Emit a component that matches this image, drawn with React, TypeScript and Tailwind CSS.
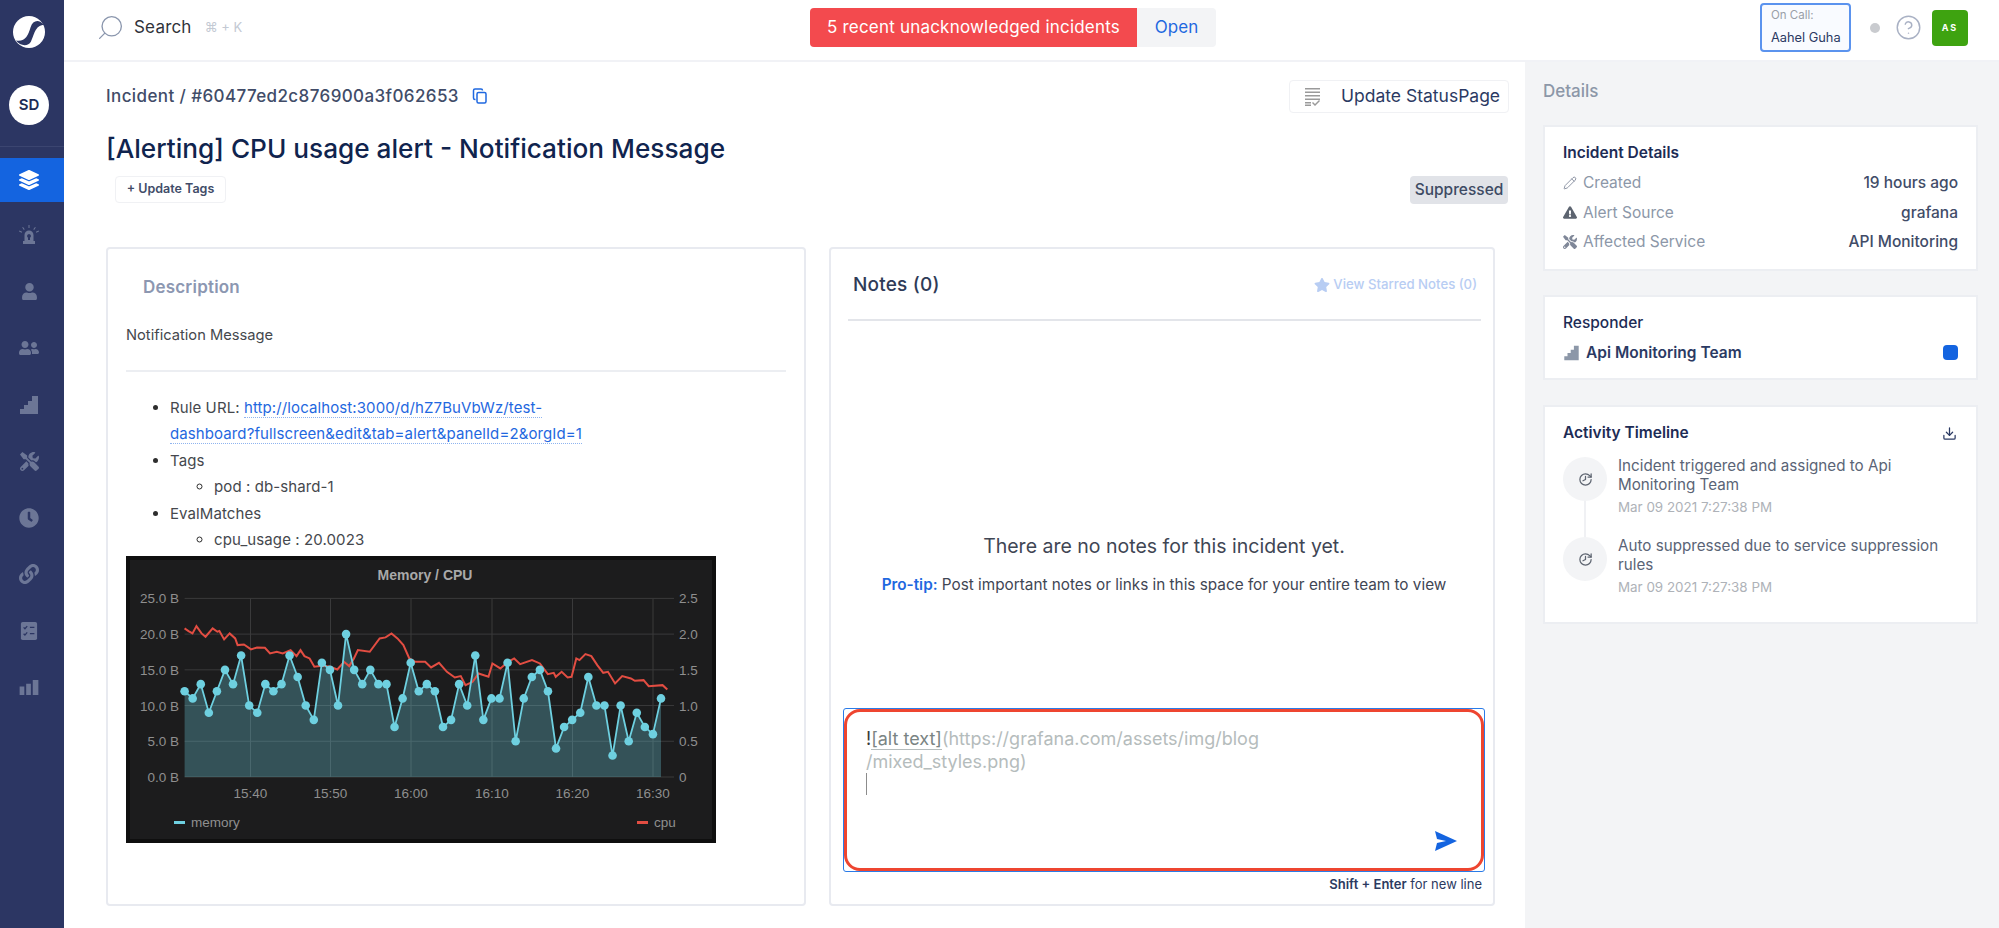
import React from "react"
import { CircleHelp, Download, History, Pencil, Search } from "lucide-react"
import { FaClock, FaExclamationTriangle, FaLayerGroup, FaLink, FaStar, FaTools, FaUser, FaUserFriends } from "react-icons/fa"

const Stairs = ({ className }: { className?: string }) => (
  <svg viewBox="0 0 20 20" className={className} fill="currentColor">
    <path d="M1 19v-5h4v-4h4V6h4V1h6v18z" />
  </svg>
)

const Siren = ({ className }: { className?: string }) => (
  <svg viewBox="0 0 20 20" className={className} fill="currentColor">
    <path d="M4 19v-3h1.500V10a4.500 4.500 0 0 1 9 0v6H16v3zM10 9a2 2 0 0 0-1 3.700V15h2v-2.300A2 2 0 0 0 10 9z" />
    <path d="M9.500 0h1v3h-1zM3.200 2.500l.8-.6 1.700 2.400-.8.600zM16.800 2.500l-.8-.6-1.700 2.400.8.600zM0 6.500l.4-.9 2.700 1.200-.4.900zM20 6.500l-.4-.9-2.700 1.200.4.900z" />
  </svg>
)

const Checklist = ({ className }: { className?: string }) => (
  <svg viewBox="0 0 20 20" className={className}>
    <rect x="1" y="0" width="18" height="20" rx="2" fill="currentColor" />
    <path d="M4 6l1.500 1.500L8 4.500M4 13l1.500 1.500L8 11.500M11 6h5M11 13h5" stroke="#2c3663" strokeWidth="1.400" fill="none" />
  </svg>
)

const Bars = ({ className }: { className?: string }) => (
  <svg viewBox="0 0 20 16" className={className} fill="currentColor">
    <path d="M0 7h5v9H0zM7 4h5v12H7zM14 0h6v16h-6z" />
  </svg>
)

const Logo = () => (
  <svg viewBox="0 0 32 32" className="h-8 w-8">
    <circle cx="16" cy="16" r="16" fill="#ffffff" />
    <path d="M31 9C26 3 20 4 17.500 11.500 15 20 12 26 3 24.500 7 30 15 31 18 25.500 21 19.500 22 9 31 9z" fill="#2c3663" />
  </svg>
)

const navIcons = [
  <Siren className="h-[20px] w-[20px]" />,
  <FaUser className="h-[17px] w-[17px]" />,
  <FaUserFriends className="h-[20px] w-[20px]" />,
  <Stairs className="h-[20px] w-[20px]" />,
  <FaTools className="h-[19px] w-[19px]" />,
  <FaClock className="h-[20px] w-[20px]" />,
  <FaLink className="h-[20px] w-[20px]" />,
  <Checklist className="h-[20px] w-[18px]" />,
  <Bars className="h-[15px] w-[20px]" />,
]

const Sidebar = () => (
  <div className="flex w-[64px] shrink-0 flex-col bg-[#2c3663]">
    <div className="flex h-[64px] items-center justify-center pr-[6px]">
      <Logo />
    </div>
    <div className="flex h-[83px] items-center justify-center border-b border-[#3b4570] pr-[6px]">
      <div className="flex h-10 w-10 items-center justify-center rounded-full bg-white text-[15px] font-semibold text-[#1d2c55]">SD</div>
    </div>
    <div className="mt-[11px] flex h-[44px] items-center justify-center bg-[#1464e0] pr-[6px] text-white">
      <FaLayerGroup className="h-[20px] w-[20px]" />
    </div>
    <div className="flex flex-col pt-[5px] text-[#6c7696]">
      {navIcons.map((icon, i) => (
        <div key={i} className="flex h-[56.500px] items-center justify-center pr-[6px]">
          {icon}
        </div>
      ))}
    </div>
  </div>
)

const Header = () => (
  <div className="flex h-[62px] shrink-0 items-start border-b-2 border-[#f1f2f6] bg-white">
    <div className="flex w-[746px] items-center pt-[13px] pl-[32px]">
      <Search className="h-[29px] w-[29px] -scale-x-100 text-[#8a96ad]" strokeWidth={1.100} />
      <span className="ml-[9px] text-[17px] tracking-[0.200px] text-[#30333a]">Search</span>
      <span className="ml-[13px] text-[13px] text-[#c3c9d3]">⌘ + K</span>
    </div>
    <div className="mt-[8px] flex h-[39px] w-[406px] text-[17px]">
      <div className="flex w-[327px] items-center justify-center rounded-l bg-[#f34a4e] tracking-[0.200px] text-white">5 recent unacknowledged incidents</div>
      <div className="flex w-[79px] items-center justify-center rounded-r bg-[#f3f4f6] text-[#1f68e0]">Open</div>
    </div>
    <div className="ml-auto flex items-start pr-[31px]">
      <div className="mt-[3px] flex h-[49px] w-[91px] flex-col justify-center rounded border-2 border-[#5b93ee] bg-[#f9fbff] pl-[9px]">
        <div className="text-[11.500px] leading-[19px] text-[#9a9fa8]">On Call:</div>
        <div className="text-[12.800px] leading-[25px] text-[#2b3a63]">Aahel Guha</div>
      </div>
      <div className="mt-[23px] ml-[19px] h-[10px] w-[10px] rounded-full bg-[#c9cbcf]" />
      <CircleHelp className="mt-[14px] ml-[15px] h-[27px] w-[27px] text-[#a9b1c4]" strokeWidth={1.300} />
      <div className="mt-[10px] ml-[10px] flex h-[36px] w-[36px] items-center justify-center rounded-sm bg-[#3ea310] text-[9px] font-bold tracking-[2px] text-white">AS</div>
    </div>
  </div>
)

const memory = [12, 11, 13, 9, 12, 15, 13, 17, 10, 9, 13, 12, 13, 17, 14, 10, 8, 16, 15, 10, 20, 15, 13, 15, 13, 13, 7, 11, 16, 12, 13, 12, 7, 8, 13, 10, 17, 8, 11, 11, 16, 5, 11, 14, 15, 12, 4, 7, 8, 9, 14, 10, 10, 3, 10, 5, 9, 7, 6, 11]

const cpu = [
  [162, 235], [172, 243], [182, 250], [192, 228], [205, 250], [215, 260], [233, 235], [245, 245], [250, 243], [262, 268], [276, 250], [290, 265], [296, 285], [312, 283], [330, 298], [345, 292], [365, 293], [378, 310], [395, 305], [410, 310], [430, 300], [445, 318], [455, 300], [465, 318], [478, 325], [490, 350], [510, 347], [530, 350], [548, 358], [565, 335], [578, 348], [590, 325], [600, 300], [630, 305], [655, 265], [670, 262], [685, 250], [700, 265], [715, 285], [730, 325], [745, 335], [770, 335], [785, 352], [805, 338], [825, 365], [845, 382], [860, 378], [872, 405], [890, 395], [905, 370], [930, 380], [940, 340], [960, 355], [980, 335], [995, 325], [1010, 342], [1040, 330], [1060, 340], [1080, 372], [1095, 368], [1100, 380], [1115, 365], [1130, 382], [1140, 380], [1152, 325], [1160, 330], [1175, 312], [1190, 318], [1205, 345], [1220, 368], [1232, 365], [1250, 400], [1268, 378], [1290, 385], [1300, 392], [1322, 390], [1335, 408], [1370, 405], [1382, 418],
]

const MemoryChart = () => {
  const left = 58.600
  const right = 535
  const bottom = 221
  const top = 42.400
  const mx = (i: number) => left + (i * (right - left)) / 59
  const my = (v: number) => bottom - (v * (bottom - top)) / 25
  const line = memory.map((v, i) => `${mx(i)},${my(v)}`).join(" ")
  const cpuLine = cpu.map(([x, y]) => `${(x - 14) * 0.3957},${(y - 18) * 0.3337}`).join(" ")
  const times = [
    [124.500, "15:40"],
    [204.500, "15:50"],
    [285, "16:00"],
    [366, "16:10"],
    [446.500, "16:20"],
    [527, "16:30"],
  ] as const
  const yTicks = [
    [25, "25.0 B", "2.5"],
    [20, "20.0 B", "2.0"],
    [15, "15.0 B", "1.5"],
    [10, "10.0 B", "1.0"],
    [5, "5.0 B", "0.5"],
    [0, "0.0 B", "0"],
  ] as const
  return (
    <svg viewBox="0 0 590 287" className="block h-[287px] w-[590px] font-['Liberation_Sans',sans-serif]">
      <rect width="590" height="287" fill="#0f0f0f" />
      <rect x="4" y="4" width="582" height="279" fill="#1c1c1d" />
      <text x="299" y="24" fill="#a9a9a9" fontSize="14" fontWeight="700" textAnchor="middle">Memory / CPU</text>
      {yTicks.map(([v, l, r]) => (
        <g key={l}>
          <line x1={left} x2={548} y1={my(v)} y2={my(v)} stroke="#3a3a3b" strokeWidth="1" />
          <text x="53" y={my(v) + 5} fill="#8f8f8f" fontSize="13.500" textAnchor="end">{l}</text>
          <text x="553" y={my(v) + 5} fill="#8f8f8f" fontSize="13.500">{r}</text>
        </g>
      ))}
      {times.map(([x, l]) => (
        <g key={l}>
          <line x1={x} x2={x} y1={top} y2={bottom} stroke="#3a3a3b" strokeWidth="1" />
          <text x={x} y="242" fill="#8f8f8f" fontSize="13.500" textAnchor="middle">{l}</text>
        </g>
      ))}
      <polygon points={`${left},${bottom} ${line} ${right},${bottom}`} fill="#6ed0e0" fillOpacity="0.3" />
      <polyline points={cpuLine} fill="none" stroke="#e24d42" strokeWidth="2" />
      <polyline points={line} fill="none" stroke="#6ed0e0" strokeWidth="1.800" />
      {memory.map((v, i) => (
        <circle key={i} cx={mx(i)} cy={my(v)} r="4.300" fill="#6ed0e0" />
      ))}
      <rect x="48" y="265" width="11" height="3" fill="#6ed0e0" />
      <text x="65" y="271" fill="#8f8f8f" fontSize="13.500">memory</text>
      <rect x="511" y="265" width="11" height="3" fill="#e24d42" />
      <text x="528" y="271" fill="#8f8f8f" fontSize="13.500">cpu</text>
    </svg>
  )
}

const DescriptionCard = () => (
  <div className="h-[659px] w-[700px] shrink-0 rounded border-2 border-[#e8eaf0] bg-white pl-[18px] pr-[18px]">
    <div className="pt-[26px] pl-[17px] text-[17px] leading-[24px] font-semibold tracking-[0.200px] text-[#8c97b1]">Description</div>
    <div className="mt-[24px] text-[14.700px] leading-[24px] text-[#45484d]">Notification Message</div>
    <div className="mt-[23px] h-[2px] bg-[#eceef2]" />
    <ul className="mt-[23px] list-disc pl-[44px] text-[15px] leading-[26.400px] tracking-[0.100px] text-[#45484d] marker:text-[#2e2e2e]">
      <li>
        Rule URL:{" "}
        <a className="border-b border-dotted border-[#8fb4ef] text-[#1f68e0]">http://localhost:3000/d/hZ7BuVbWz/test-</a>
        <br />
        <a className="border-b border-dotted border-[#8fb4ef] text-[#1f68e0]">dashboard?fullscreen&amp;edit&amp;tab=alert&amp;panelId=2&amp;orgId=1</a>
      </li>
      <li>
        Tags
        <ul className="list-[circle] pl-[44px]">
          <li>pod : db-shard-1</li>
        </ul>
      </li>
      <li>
        EvalMatches
        <ul className="list-[circle] pl-[44px]">
          <li>cpu_usage : 20.0023</li>
        </ul>
      </li>
    </ul>
    <div className="mt-[3px]">
      <MemoryChart />
    </div>
  </div>
)

const NotesCard = () => (
  <div className="flex h-[659px] w-[666px] shrink-0 flex-col rounded border-2 border-[#e8eaf0] bg-white pl-[12px] pr-[8px]">
    <div className="ml-[5px] mr-[4px] flex h-[72px] items-center justify-between border-b-2 border-[#e3e5ea] pr-[4px] pl-[5px] pt-[2px]">
      <span className="text-[19px] font-medium tracking-[0.200px] text-[#2f3b57]">Notes (0)</span>
      <span className="flex items-center gap-[3px] text-[13.200px] font-medium text-[#b8cdf3]">
        <FaStar className="h-[16px] w-[16px]" />
        View Starred Notes (0)
      </span>
    </div>
    <div className="flex flex-1 flex-col items-center pt-[212px]">
      <div className="text-[19.500px] leading-[26px] text-[#3f4654]">There are no notes for this incident yet.</div>
      <div className="mt-[14px] text-[15.300px] leading-[24px] text-[#3f4654]">
        <span className="font-semibold text-[#1f68e0]">Pro-tip:</span> Post important notes or links in this space for your entire team to view
      </div>
    </div>
    <div className="h-[164px] rounded-[3px] border border-[#2a7be8] bg-white">
      <div className="relative h-full rounded-[16px] border-[3px] border-[#ee4530] bg-white pt-[16px] pl-[19px] text-[18px] leading-[22.500px] text-[#b5bcbc]">
        <div>
          <span className="text-[#3a3a3a]">!</span>
          <span className="border-b border-[#b5bcbc] text-[#7a8483]">[alt text]</span>
          (https://grafana.com/assets/img/blog
        </div>
        <div>/mixed_styles.png)</div>
        <div className="h-[22px] w-px bg-[#8c8c8c]" />
        <svg viewBox="0 0 22 20" className="absolute right-[24px] bottom-[17px] h-[20px] w-[22px]" fill="#1464e0">
          <path d="M0 0l22 10L0 20l2-8 9-2-9-2z" />
        </svg>
      </div>
    </div>
    <div className="mt-[3px] mr-[3px] mb-[11px] text-right text-[13px] leading-[18px] text-[#2c3a5f]">
      <span className="font-semibold">Shift + Enter</span> for new line
    </div>
  </div>
)

const Main = () => (
  <div className="w-[1461px] shrink-0 bg-white pl-[42px]">
    <div className="flex h-[51px] items-end justify-between pr-[16px]">
      <div className="flex items-center gap-[13px] pb-[4px] text-[17px] font-medium tracking-[0.400px] text-[#414c68]">
        <span>Incident / #60477ed2c876900a3f062653</span>
        <svg viewBox="0 0 16 16" className="h-[16px] w-[16px]" fill="none" stroke="#1f68e0" strokeWidth="1.500">
          <rect x="5" y="4.500" width="9" height="10.500" rx="1.500" />
          <path d="M3.500 11.500H3A1.500 1.500 0 0 1 1.500 10V2.500A1.500 1.500 0 0 1 3 1h6a1.500 1.500 0 0 1 1.500 1.500" />
        </svg>
      </div>
      <div className="flex h-[33px] w-[220px] items-center rounded border border-[#f0f1f4] pl-[15px] text-[17.500px] text-[#2b3a63]">
        <svg viewBox="0 0 16 18" className="h-[18px] w-[16px]" fill="#9a9a9a">
          <path d="M0 0h15v1.500H0zM0 3.500h15V5H0zM0 7h15v1.500H0zM0 10.500h15V12H0zM0 14h6v1.500H0zM0 16.500h6V18H0zM8 14l2 2 4-4 1 1-5 5-3-3z" />
        </svg>
        <span className="ml-[20px]">Update StatusPage</span>
      </div>
    </div>
    <div className="mt-[17px] text-[26.200px] leading-[38px] font-medium text-[#10244e]">[Alerting] CPU usage alert - Notification Message</div>
    <div className="mt-[8px] flex items-start justify-between pr-[17px]">
      <div className="ml-[9px] flex h-[27px] w-[111px] items-center justify-center rounded-sm border border-[#f0f1f4] text-[12.500px] font-semibold text-[#414c68]">+ Update Tags</div>
      <div className="flex h-[28px] w-[98px] items-center justify-center rounded-sm bg-[#e1e3e8] text-[15.500px] font-medium text-[#3d4a63]">Suppressed</div>
    </div>
    <div className="mt-[43px] flex gap-[23px]">
      <DescriptionCard />
      <NotesCard />
    </div>
  </div>
)

const Row = ({ icon, label, value }: { icon: React.ReactNode; label: string; value: string }) => (
  <div className="flex h-[29.500px] items-center justify-between">
    <div className="flex items-center text-[15.500px] text-[#8c97a8]">
      <span className="flex w-[20px] text-[#7f8798]">{icon}</span>
      {label}
    </div>
    <div className="text-[15.500px] font-medium text-[#414c68]">{value}</div>
  </div>
)

const Activity = ({ text, date }: { text: React.ReactNode; date: string }) => (
  <div className="flex h-[80px]">
    <div className="flex h-[44px] w-[44px] shrink-0 items-center justify-center rounded-full bg-[#f3f4f6]">
      <History className="h-[15px] w-[15px] -scale-x-100 text-[#5d6470]" strokeWidth={2} />
    </div>
    <div className="ml-[11px] -mt-[1px]">
      <div className="text-[15.200px] leading-[19px] text-[#5a6476]">{text}</div>
      <div className="mt-[4px] text-[13.400px] leading-[18px] text-[#aeb2b8]">{date}</div>
    </div>
  </div>
)

const Details = () => (
  <div className="flex-1 bg-[#f3f4f6] pl-[18px] pr-[21px]">
    <div className="pt-[17px] text-[17px] leading-[24px] font-medium text-[#8c97a8]">Details</div>
    <div className="mt-[22px] h-[146px] border-2 border-[#eceef2] bg-white px-[18px] pt-[15px]">
      <div className="mb-[4px] text-[15.500px] leading-[22px] font-semibold text-[#1d2c55]">Incident Details</div>
      <Row icon={<Pencil className="h-[14px] w-[14px]" strokeWidth={1.500} />} label="Created" value="19 hours ago" />
      <Row icon={<FaExclamationTriangle className="h-[13px] w-[14px] text-[#5d6470]" />} label="Alert Source" value="grafana" />
      <Row icon={<FaTools className="h-[14px] w-[14px]" />} label="Affected Service" value="API Monitoring" />
    </div>
    <div className="mt-[24px] h-[85px] border-2 border-[#eceef2] bg-white px-[18px] pt-[15px]">
      <div className="text-[15.500px] leading-[22px] font-medium text-[#1d2c55]">Responder</div>
      <div className="mt-[7px] flex items-center">
        <Stairs className="h-[16px] w-[17px] text-[#8c97a8]" />
        <span className="ml-[6px] text-[15.500px] font-semibold text-[#2b3a63]">Api Monitoring Team</span>
        <span className="ml-auto h-[15px] w-[15px] rounded-[4px] bg-[#1464e0]" />
      </div>
    </div>
    <div className="mt-[25px] h-[219px] border-2 border-[#eceef2] bg-white px-[18px] pt-[15px]">
      <div className="flex items-center justify-between">
        <span className="text-[15.500px] leading-[22px] font-semibold text-[#1d2c55]">Activity Timeline</span>
        <Download className="mr-[1px] h-[15px] w-[15px] text-[#2b3a63]" strokeWidth={2} />
      </div>
      <div className="relative mt-[13px]">
        <div className="absolute top-[44px] left-[21px] h-[36px] w-[2px] bg-[#f0f1f4]" />
        <Activity text={<>Incident triggered and assigned to Api<br />Monitoring Team</>} date="Mar 09 2021 7:27:38 PM" />
        <Activity text={<>Auto suppressed due to service suppression<br />rules</>} date="Mar 09 2021 7:27:38 PM" />
      </div>
    </div>
  </div>
)

const App = () => {
  return (
    <div className="flex h-screen w-full overflow-hidden bg-white font-[Inter,sans-serif]">
      <Sidebar />
      <div className="flex flex-1 flex-col">
        <Header />
        <div className="flex flex-1">
          <Main />
          <Details />
        </div>
      </div>
    </div>
  )
}

export default App
